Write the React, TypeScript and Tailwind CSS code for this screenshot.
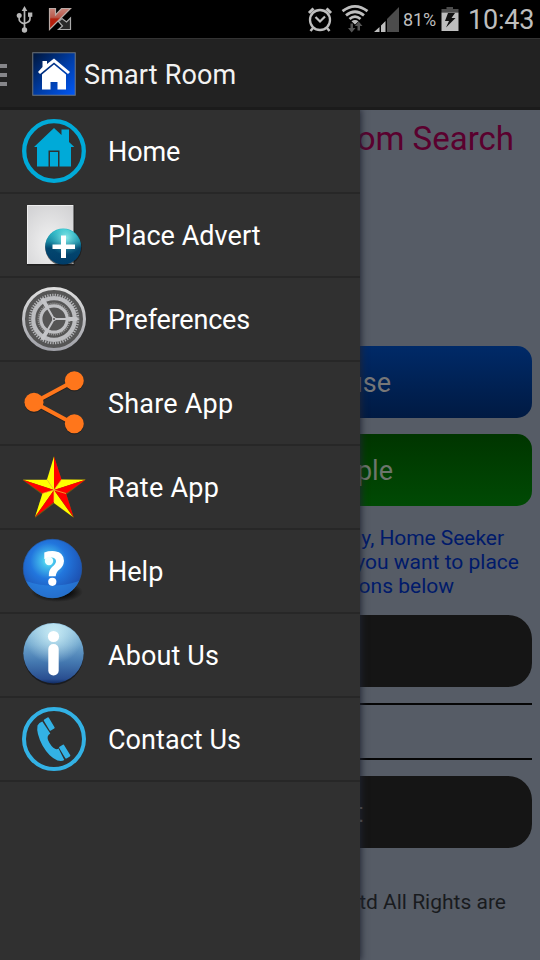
import type { ReactNode } from "react";

function HomeIcon() {
  return (
    <svg viewBox="0 0 64 64" className="size-16">
      <circle cx="32" cy="32" r="29.8" fill="none" stroke="#00aad8" strokeWidth="4.3" />
      <path
        d="M32 9 L39.5 16 V10.5 H47 V23 L52.3 28 H49 V47.500 H37.5 V31.5 H26.5 V47.500 H15 V28 H12 Z M28 33 H36 V47.500 H28 Z"
        fill="#00aad8"
      />
    </svg>
  );
}

function AdvertIcon() {
  return (
    <svg viewBox="0 0 64 64" className="size-16 overflow-visible">
      <defs>
        <radialGradient id="paper" cx=".5" cy=".65" r=".75">
          <stop offset="0" stopColor="#f2f2f2" />
          <stop offset="1" stopColor="#d2d2d4" />
        </radialGradient>
        <linearGradient id="plusBall" x1="0" y1="0" x2="0" y2="1">
          <stop offset="0" stopColor="#30c0cc" />
          <stop offset=".35" stopColor="#1a8aa4" />
          <stop offset=".55" stopColor="#03476f" />
          <stop offset="1" stopColor="#003c68" />
        </linearGradient>
        <radialGradient id="plusGlow" cx=".58" cy=".25" r=".5">
          <stop offset="0" stopColor="#a8fff8" stopOpacity=".8" />
          <stop offset="1" stopColor="#40d0d8" stopOpacity="0" />
        </radialGradient>
      </defs>
      <rect x="5" y="2" width="47.500" height="60.500" fill="#151515" opacity=".6" />
      <rect x="5" y="2" width="46.500" height="59" fill="url(#paper)" />
      <path d="M5.500 61V2.500H51" fill="none" stroke="#f3f3f3" strokeWidth=".8" />
      <circle cx="41.500" cy="44.500" r="18.300" fill="#111" opacity=".6" />
      <circle cx="41.200" cy="43.500" r="18" fill="url(#plusBall)" />
      <circle cx="41.200" cy="43.500" r="17.400" fill="url(#plusGlow)" />
      <path d="M39 32.500h5v9h9v4.500h-9v9h-5v-9h-8.500v-4.500H39z" fill="#fff" />
    </svg>
  );
}

function GearIcon() {
  return (
    <svg viewBox="0 0 64 64" className="size-16">
      <defs>
        <linearGradient id="steel" x1="0" y1="0" x2="0" y2="1">
          <stop offset="0" stopColor="#dedede" />
          <stop offset="1" stopColor="#a0a1a8" />
        </linearGradient>
      </defs>
      <circle cx="32" cy="32" r="30.500" fill="#555" stroke="url(#steel)" strokeWidth="3" />
      <circle cx="32" cy="32" r="24" fill="none" stroke="#b4b5b8" strokeWidth="2.600" strokeDasharray="1.25 1.263" />
      <circle cx="32" cy="32" r="20.800" fill="none" stroke="#bcbdc0" strokeWidth="4.200" />
      <circle cx="32" cy="32" r="15.600" fill="none" stroke="#999" strokeWidth="1.800" strokeDasharray="1 1.042" />
      <circle cx="32" cy="32" r="13.200" fill="none" stroke="#bfc0c3" strokeWidth="3.200" />
      <path d="M32 32H51M32 32L22.500 15.500M32 32L22.500 48.500" stroke="#c4c5c8" strokeWidth="2" />
      <path d="M47 32H54M24.500 19L21 13M24.500 45L21 51" stroke="#c4c5c8" strokeWidth="4" strokeLinecap="round" />
      <circle cx="32" cy="32" r="2" fill="#c8c8ca" />
      <circle cx="32" cy="32" r="1" fill="#555" />
    </svg>
  );
}

function ShareIcon() {
  return (
    <svg viewBox="0 0 64 64" className="size-16 overflow-visible">
      <g fill="#111" opacity=".4" stroke="#111">
        <path d="M52 11L12 32.500L52 54" fill="none" strokeWidth="4" />
        <circle cx="52.300" cy="11" r="9" />
        <circle cx="12" cy="32.500" r="9" />
        <circle cx="52.300" cy="54" r="9" />
      </g>
      <path d="M52 10L12 31.500L52 53" fill="none" stroke="#ff761b" strokeWidth="4" />
      <circle cx="52.300" cy="9.700" r="9.500" fill="#ff761b" />
      <circle cx="12" cy="31.300" r="9.500" fill="#ff761b" />
      <circle cx="52.300" cy="52.700" r="9.500" fill="#ff761b" />
    </svg>
  );
}

function StarIcon() {
  return (
    <svg viewBox="0 0 64 64" className="size-16 overflow-visible">
      <path d="M32 1L39.500 24.500H64L44.500 39.500L52 63L32 48.500L13 63L20 39.500L0.500 25L26 25Z" fill="#6b5a10" />
      <g fill="#ff0">
        <path d="M32 35V1.500L25 24.500Z" />
        <path d="M32 35L63.500 24.700L39.500 24.500Z" />
        <path d="M32 35L51 62L32 48Z" />
        <path d="M32 35L13 62L20.500 38.500Z" />
        <path d="M32 35L.8 24.700L25 24.700Z" />
      </g>
      <g fill="#f00">
        <path d="M32 35V1.500L39.500 24.500Z" />
        <path d="M32 35L63.500 24.700L44 38.500Z" />
        <path d="M32 35L51.500 62L44 38.500Z" />
        <path d="M32 35L13 62L32 47Z" />
        <path d="M32 35L.8 24.700L20.500 38.500Z" />
      </g>
      <path d="M32 35L39.500 24.500M32 35L44 38.500M32 35V47M32 35L20.500 38.500M32 35L25 24.500" stroke="#ffca36" strokeWidth=".7" />
    </svg>
  );
}

function HelpIcon() {
  return (
    <svg viewBox="0 0 64 64" className="size-16 overflow-visible">
      <defs>
        <radialGradient id="helpBall" cx=".43" cy=".37" r=".62">
          <stop offset="0" stopColor="#65f5f5" />
          <stop offset=".18" stopColor="#43bdec" />
          <stop offset=".5" stopColor="#2276dd" />
          <stop offset="1" stopColor="#1d50b0" />
        </radialGradient>
        <radialGradient id="helpShade">
          <stop offset=".5" stopColor="#0c0c0c" />
          <stop offset="1" stopColor="#0c0c0c" stopOpacity="0" />
        </radialGradient>
      </defs>
      <ellipse cx="35" cy="53" rx="26" ry="10" fill="url(#helpShade)" />
      <circle cx="30.500" cy="29.500" r="29.200" fill="url(#helpBall)" stroke="#225baf" strokeWidth=".7" />
      <path d="M4 42Q30 51 57 42A29 29 0 0 1 4 42" fill="#2d8fec" opacity=".5" />
      <path
        d="M22.300 13.500Q27 11.700 33 12.200Q42 13.500 42 22Q41.500 27.500 37.500 30.500Q34 33 33.700 37.200H26.800Q26.300 31.500 30 28Q34 25 34 22Q33.500 18.500 29.500 18.500Q26 18.500 22.300 20.300Z"
        fill="#fff"
      />
      <circle cx="30.300" cy="42.800" r="4.100" fill="#fff" />
      <circle cx="27" cy="22" r="4.200" fill="#efffff" />
    </svg>
  );
}

function InfoIcon() {
  return (
    <svg viewBox="0 0 64 64" className="size-16 overflow-visible">
      <defs>
        <linearGradient id="infoBall" x1="0" y1="0" x2="0" y2="1">
          <stop offset="0" stopColor="#9ccbe4" />
          <stop offset=".35" stopColor="#6fa6cd" />
          <stop offset=".65" stopColor="#4478b0" />
          <stop offset=".93" stopColor="#294e90" />
          <stop offset="1" stopColor="#112b62" />
        </linearGradient>
        <radialGradient id="infoGlow" cx=".5" cy=".18" r=".5">
          <stop offset="0" stopColor="#d5f6fb" stopOpacity=".85" />
          <stop offset="1" stopColor="#d5f6fb" stopOpacity="0" />
        </radialGradient>
      </defs>
      <circle cx="31.500" cy="32" r="30" fill="#101318" opacity=".7" />
      <circle cx="31.500" cy="30.200" r="30.200" fill="url(#infoBall)" />
      <circle cx="31.500" cy="30.200" r="29.500" fill="url(#infoGlow)" />
      <circle cx="31.500" cy="13.500" r="5.600" fill="#fff" />
      <rect x="26.300" y="21" width="10.400" height="31.500" rx="5" fill="#fff" />
    </svg>
  );
}

function PhoneIcon() {
  return (
    <svg viewBox="0 0 64 64" className="size-16">
      <circle cx="32" cy="32" r="30" fill="none" stroke="#33b2e5" strokeWidth="4" />
      <g fill="#33b2e5">
        <path d="M20.300 14.500L28.300 26.500Q24.500 28.500 26 33Q29 40 33.500 42Q35.500 42.500 36.500 41.500L42.300 53Q40 54.500 35.500 53.500Q27 50 20.500 38.500Q14 26 15.500 18.500Q17 15.500 20.300 14.500Z" />
        <rect x="-2.900" y="-6.500" width="5.800" height="13" rx="1" transform="translate(27.200 17) rotate(-31)" />
        <rect x="-2.900" y="-6.800" width="5.800" height="13.600" rx="1" transform="translate(42.700 44.600) rotate(-31)" />
      </g>
    </svg>
  );
}

const items: { label: string; icon: ReactNode; tracking: string }[] = [
  { label: "Home", icon: <HomeIcon />, tracking: "tracking-[-0.1px]" },
  { label: "Place Advert", icon: <AdvertIcon />, tracking: "tracking-[0.04px]" },
  { label: "Preferences", icon: <GearIcon />, tracking: "tracking-[-0.2px]" },
  { label: "Share App", icon: <ShareIcon />, tracking: "tracking-[0.2px]" },
  { label: "Rate App", icon: <StarIcon />, tracking: "tracking-[0.25px]" },
  { label: "Help", icon: <HelpIcon />, tracking: "tracking-normal" },
  { label: "About Us", icon: <InfoIcon />, tracking: "tracking-[0.12px]" },
  { label: "Contact Us", icon: <PhoneIcon />, tracking: "tracking-[0.05px]" },
];

function StatusBar() {
  return (
    <header className="flex h-[38px] shrink-0 items-center bg-black text-[#bebebe]">
      <svg viewBox="0 0 18 28" className="ml-4 h-7 w-[18px]" fill="none" stroke="#b8b8b8" strokeWidth="1.700">
        <path d="M8.500 4V24M3.200 11V14.500Q3.200 17 8.500 19M14 10V14Q14 17 8.500 18.500" />
        <path d="M8.500 1L5.700 6H11.300Z" fill="#b8b8b8" stroke="none" />
        <circle cx="3.200" cy="10.500" r="2.500" fill="#b8b8b8" stroke="none" />
        <rect x="12" y="7.500" width="4.300" height="4.300" fill="#b8b8b8" stroke="none" />
        <circle cx="8.500" cy="25" r="2.700" fill="#b8b8b8" stroke="none" />
      </svg>
      <svg viewBox="0 0 24 24" className="ml-[14px] size-6">
        <defs>
          <linearGradient id="kRed" x1="0" y1="0" x2="0" y2="1">
            <stop offset="0" stopColor="#c98379" />
            <stop offset=".42" stopColor="#b9584b" />
            <stop offset=".5" stopColor="#b3200e" />
            <stop offset="1" stopColor="#bd1d08" />
          </linearGradient>
        </defs>
        <path d="M10.500 14.500L14 11.500L18.500 15L22.500 11V22.500H10.500L14.500 19Z" fill="#292929" stroke="#aaa" strokeWidth="1.200" />
        <path d="M1.500 1.500H7.500V8L13.500 1.500H22.500L1.500 22.500Z" fill="url(#kRed)" stroke="#b9aaa6" strokeWidth="1.200" />
      </svg>
      <div className="flex-1" />
      <svg viewBox="0 0 26 26" className="size-[26px]" fill="none" stroke="#bebebe">
        <circle cx="13" cy="14" r="10" strokeWidth="2.300" />
        <path d="M2 7L6.500 2.500M19.500 2.500L24 7" strokeWidth="3" />
        <path d="M8.500 11L13 15.500L18 10.500" strokeWidth="2.200" />
        <path d="M6 22L3.500 25M20 22L22.500 25" strokeWidth="2.500" />
      </svg>
      <svg viewBox="0 0 28 30" className="ml-2 h-[30px] w-7" fill="none" stroke="#bebebe" strokeWidth="2.800">
        <path d="M1.500 7.200Q14 -2.500 26.500 7.200M5 11.400Q14 4 23 11.400M8.500 15Q14 10.200 19.500 15" />
        <path d="M10.500 17.300Q14 14.500 17.500 17.300L14 20.500Z" fill="#bebebe" stroke="none" />
        <path d="M9.500 19.500H12V24H14.500L10.700 28.500L7 24H9.500ZM16.500 26.500V22H13.800L17.700 17.500L21.500 22H19V26.500Z" fill="#555" stroke="none" />
      </svg>
      <svg viewBox="0 0 26 26" className="ml-[5px] h-[26px] w-[26px]">
        <path d="M0 26L5.500 21V26ZM7 19.500L11.500 15V26H7Z" fill="#bebebe" />
        <path d="M13 13L25 1V26H13Z" fill="#4c4c4c" />
      </svg>
      <span className="ml-[3px] w-[34px] pt-px text-[18px] leading-[21px] tracking-[-0.1px] whitespace-nowrap">81%</span>
      <svg viewBox="0 0 18 24" className="ml-1 h-6 w-[18px]">
        <path d="M5.500 0H12V2H17.500V5.500H.500V2H5.500Z" fill="#4c4c4c" />
        <path d="M.500 5.500H17.500V24H.500Z" fill="#bebebe" />
        <path d="M7 6H14L10.500 11H14.500L5 20.500L8 14H4Z" fill="#111" />
      </svg>
      <span className="ml-[9px] w-[72px] pt-0.5 text-[27px] leading-8 tracking-[-0.2px] whitespace-nowrap">10:43</span>
    </header>
  );
}

function ActionBar() {
  return (
    <div className="flex h-[72px] shrink-0 items-center border-t border-b-[3px] border-t-[#333] border-b-[#1b1b1b] bg-[#222]">
      <div className="flex w-[7px] flex-col gap-[5px] pt-[3px]">
        <div className="h-1 bg-[#86868a]" />
        <div className="h-1 bg-[#86868a]" />
        <div className="h-1 bg-[#86868a]" />
      </div>
      <svg viewBox="0 0 44 44" className="mt-0.5 ml-[25px] size-11">
        <defs>
          <linearGradient id="tile" x1="0" y1="0" x2="1" y2="1">
            <stop offset="0" stopColor="#001538" />
            <stop offset=".5" stopColor="#003ba0" />
            <stop offset="1" stopColor="#0058fa" />
          </linearGradient>
        </defs>
        <rect x=".75" y=".75" width="42.500" height="42.500" fill="url(#tile)" stroke="#6c747c" strokeWidth="1" />
        <path d="M10.500 15V9H15V12L22 6.500L38 20L36 22L22 10.500L8 22L6 20Z" fill="#fff" />
        <path d="M22 12.500L34 22.500V37.500H25.500V30H18.500V37.500H10V22.500Z" fill="#fff" />
      </svg>
      <h1 className="ml-2 pt-1 text-[27px] leading-8 tracking-[0.15px] text-[#f2f2f2]">Smart Room</h1>
    </div>
  );
}

function Drawer() {
  return (
    <nav className="z-10 h-full w-[360px] shrink-0 bg-[#303030] shadow-[0_0_7px_1px_#202532]">
      {items.map((item) => (
        <div key={item.label} className="flex h-[84px] items-center border-b-2 border-[#272727] pl-[22px]">
          {item.icon}
          <span className={`ml-[22px] pt-0.5 text-[27px] leading-8 text-white ${item.tracking}`}>{item.label}</span>
        </div>
      ))}
    </nav>
  );
}

function Content() {
  return (
    <main className="flex min-w-0 flex-1 flex-col overflow-hidden bg-[#565c66] pr-2 whitespace-nowrap">
      <h2 className="mt-[9px] flex h-10 justify-end pr-[18px] text-[33px] leading-10 text-[#5a002e]">om Search</h2>
      <div className="mt-[187px] flex h-[72px] items-center justify-end rounded-r-[15px] bg-linear-to-b from-[#002a68] to-[#001a43] pt-0.5 pr-[141px] text-[27px] text-[#777]">
        use
      </div>
      <div className="mt-4 flex h-[72px] items-center justify-end rounded-r-[15px] bg-linear-to-b from-[#003500] to-[#004a04] pt-0.5 pr-[139px] text-[27px] text-[#6c756c]">
        ple
      </div>
      <div className="mt-5 flex flex-col items-end text-[21px] leading-6 text-[#001a6a]">
        <span className="pr-7 tracking-[-0.05px]">y, Home Seeker</span>
        <span className="pr-[13px]">you want to place</span>
        <span className="pr-[78px]">ons below</span>
      </div>
      <div className="mt-[17px] h-[72px] rounded-r-[24px] bg-[#151515]" />
      <div className="mt-4 h-0.5 bg-[#050505]" />
      <div className="mt-[53px] h-0.5 bg-[#050505]" />
      <div className="mt-4 flex h-[72px] items-center justify-end rounded-r-[24px] bg-[#151515] pt-0.5 pr-[169px] text-[27px] text-[#666]">
        t
      </div>
      <div className="mt-[42px] flex justify-end pr-[26px] text-[21px] leading-6 text-[#191b1e]">td All Rights are</div>
    </main>
  );
}

export default function App() {
  return (
    <div className="flex h-[960px] w-[540px] flex-col overflow-hidden bg-black font-[Roboto,sans-serif]">
      <StatusBar />
      <ActionBar />
      <div className="flex min-h-0 flex-1 overflow-hidden">
        <Drawer />
        <Content />
      </div>
    </div>
  );
}
